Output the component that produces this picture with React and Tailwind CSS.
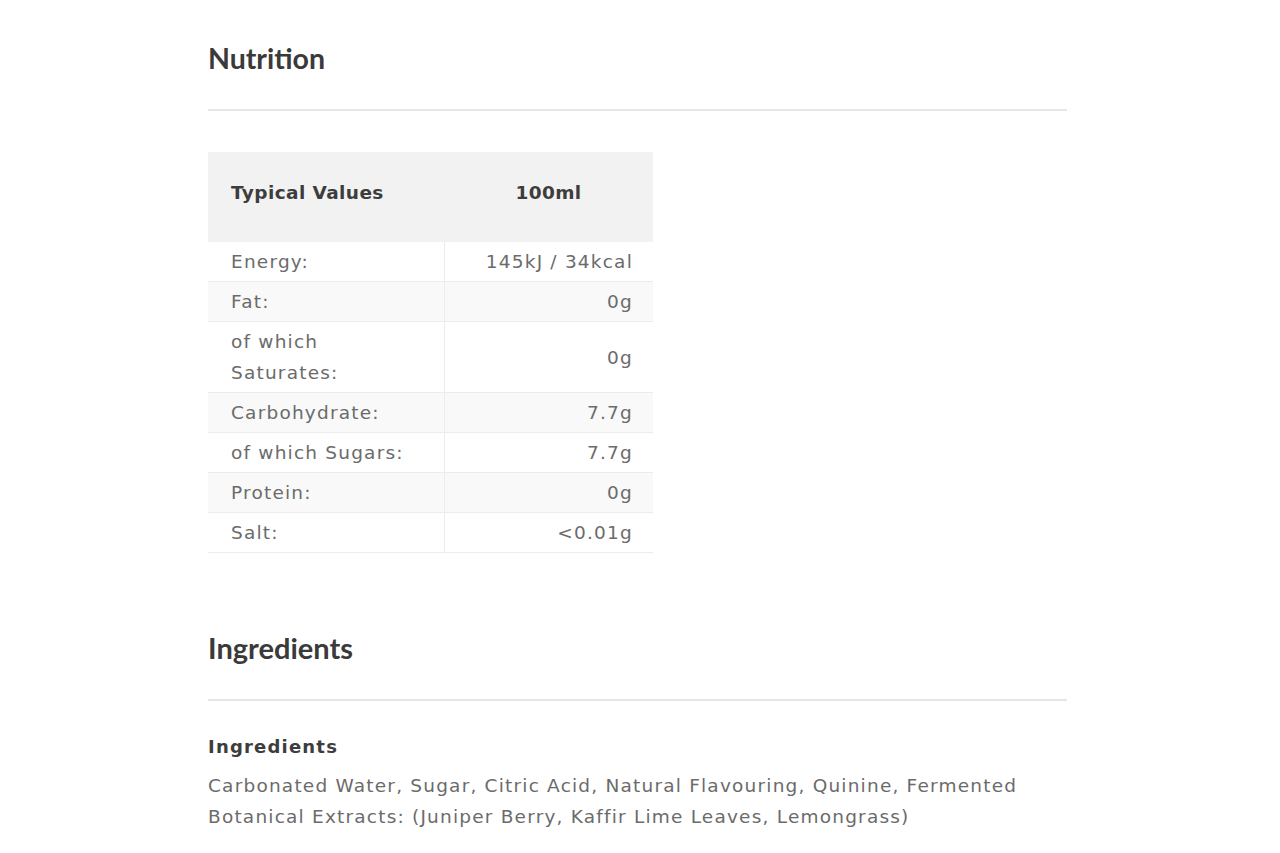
const rows = [
  { label: "Energy:", value: "145kJ / 34kcal" },
  { label: "Fat:", value: "0g" },
  { label: ["of which", "Saturates:"], value: "0g" },
  { label: "Carbohydrate:", value: "7.7g" },
  { label: "of which Sugars:", value: "7.7g" },
  { label: "Protein:", value: "0g" },
  { label: "Salt:", value: "<0.01g" },
];

const bodyFont = { fontFamily: "'DejaVu Sans', 'Noto Sans', sans-serif" };
const headFont = { fontFamily: "Lato, sans-serif" };

export default function App() {
  return (
    <div className="min-h-[853px] bg-white" style={bodyFont}>
      <div className="ml-[208px] w-[859px] pt-[37px]">
        <h2 className="text-[28.5px] font-bold leading-[42px] text-[#3a3a3a]" style={headFont}>
          Nutrition
        </h2>
        <div className="mt-[30px] h-[2px] bg-[#e6e6e6]" />

        <table className="mt-[41px] w-[445px] border-collapse text-[18.5px] tracking-[1.2px] text-[#6b6b6b]">
          <thead>
            <tr className="bg-[#f2f2f2]">
              <th className="h-[90px] w-[236px] pb-[8px] pl-[23px] text-left font-bold tracking-[0.4px] text-[#3d3d3d]">Typical Values</th>
              <th className="h-[90px] pb-[8px] text-center font-bold tracking-[0.4px] text-[#3d3d3d]">100ml</th>
            </tr>
          </thead>
          <tbody>
            {rows.map((row, i) => (
              <tr key={i} className={i % 2 === 1 ? "bg-[#f9f9f9]" : "bg-white"}>
                <td className="border-b border-r border-[#ececec] py-[4px] pl-[23px] pr-[10px] leading-[31px]">
                  {Array.isArray(row.label) ? (
                    <>
                      {row.label[0]}
                      <br />
                      {row.label[1]}
                    </>
                  ) : (
                    row.label
                  )}
                </td>
                <td className="border-b border-[#ececec] py-[4px] pr-[20px] text-right leading-[31px]">{row.value}</td>
              </tr>
            ))}
          </tbody>
        </table>

        <h2 className="mt-[74px] text-[29px] font-bold leading-[42px] text-[#3a3a3a]" style={headFont}>
          Ingredients
        </h2>
        <div className="mt-[30px] h-[2px] bg-[#e6e6e6]" />

        <h3 className="mt-[33px] text-[18px] font-bold tracking-[1.2px] leading-[26px] text-[#3d3d3d]">Ingredients</h3>
        <p className="mt-[10px] text-[18.5px] tracking-[1.2px] leading-[31px] text-[#6b6b6b]">
          Carbonated Water, Sugar, Citric Acid, Natural Flavouring, Quinine, Fermented
          <br />
          Botanical Extracts: (Juniper Berry, Kaffir Lime Leaves, Lemongrass)
        </p>
      </div>
    </div>
  );
}
